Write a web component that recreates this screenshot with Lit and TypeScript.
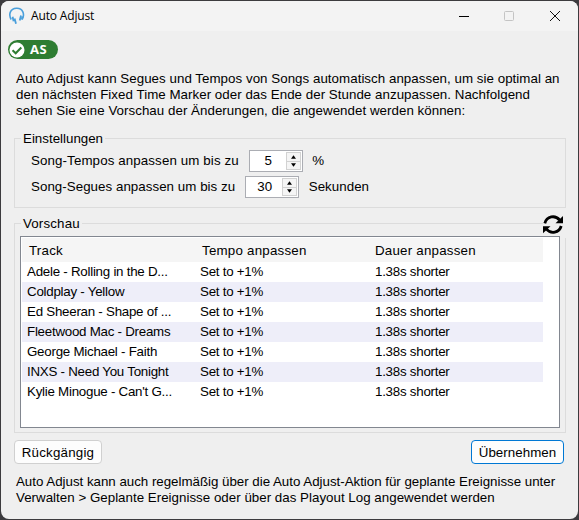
import { LitElement, html, css, svg } from 'lit';
import { customElement, property } from 'lit/decorators.js';

interface TrackRow {
  track: string;
  tempo: string;
  duration: string;
}

const ROWS: TrackRow[] = [
  { track: 'Adele - Rolling in the D...', tempo: 'Set to +1%', duration: '1.38s shorter' },
  { track: 'Coldplay - Yellow', tempo: 'Set to +1%', duration: '1.38s shorter' },
  { track: 'Ed Sheeran - Shape of ...', tempo: 'Set to +1%', duration: '1.38s shorter' },
  { track: 'Fleetwood Mac - Dreams', tempo: 'Set to +1%', duration: '1.38s shorter' },
  { track: 'George Michael - Faith', tempo: 'Set to +1%', duration: '1.38s shorter' },
  { track: 'INXS - Need You Tonight', tempo: 'Set to +1%', duration: '1.38s shorter' },
  { track: "Kylie Minogue - Can't G...", tempo: 'Set to +1%', duration: '1.38s shorter' },
];

@customElement('number-spinner')
export class NumberSpinner extends LitElement {
  static styles = css`
    :host {
      display: flex;
      box-sizing: border-box;
      width: 54px;
      height: 22px;
      padding: 1px;
      border: 1px solid #abadb3;
      background: #fff;
    }

    .value {
      flex: 1;
      line-height: 18px;
      text-align: center;
    }

    .arrows {
      display: flex;
      flex-direction: column;
      width: 15px;
    }

    .arrow {
      display: flex;
      flex: 1;
      align-items: center;
      justify-content: center;
      border: 1px solid #d2d2d2;
      background: #f5f5f5;
    }

    .arrow + .arrow {
      border-top: 0;
    }

    svg {
      display: block;
    }
  `;

  @property({ type: Number })
  value = 0;

  render() {
    return html`
      <span class="value">${this.value}</span>
      <span class="arrows">
        <span class="arrow">
          <svg width="5" height="4" viewBox="0 0 5 4"><path d="M2.5 .3 5 3.7H0Z" /></svg>
        </span>
        <span class="arrow">
          <svg width="5" height="4" viewBox="0 0 5 4"><path d="M0 .3H5L2.5 3.7Z" /></svg>
        </span>
      </span>
    `;
  }
}

@customElement('app-root')
export class AppRoot extends LitElement {
  static styles = css`
    :host {
      display: block;
      box-sizing: border-box;
      width: 579px;
      height: 520px;
      padding: 1px;
      overflow: hidden;
      background: #3c3b3e;
      color: #000;
      font-family: 'Liberation Sans', Arial, sans-serif;
      font-size: 13.33px;
      line-height: 16px;
      white-space: nowrap;
    }

    svg {
      display: block;
    }

    .window {
      display: flex;
      flex-direction: column;
      height: 518px;
      border-radius: 8px;
      overflow: hidden;
      background: #efefef;
    }

    .titlebar {
      display: flex;
      align-items: center;
      height: 30px;
      padding: 0 1px 0 8px;
      background: #f3f3f3;
    }

    .title {
      flex: 1;
      margin-left: 6px;
      font-family: 'Open Sans', 'Noto Sans', sans-serif;
      font-size: 12px;
      letter-spacing: -0.15px;
    }

    .controls {
      display: flex;
    }

    .controls svg {
      width: 45px;
      height: 28px;
    }

    .badge {
      display: flex;
      align-items: center;
      align-self: flex-start;
      box-sizing: border-box;
      width: 50px;
      height: 19px;
      margin: 9px 0 0 7px;
      padding-left: 1px;
      border-radius: 10px;
      background: #2e7d32;
      color: #fff;
      font-family: 'Open Sans', sans-serif;
      font-size: 13px;
      font-weight: 700;
    }

    .badge span {
      margin-left: 5px;
      padding-bottom: 2px;
      letter-spacing: 0.6px;
    }

    .text {
      margin: 0;
      padding-left: 15px;
    }

    .intro {
      margin-top: 12px;
      letter-spacing: 0.035px;
    }

    fieldset {
      box-sizing: border-box;
      min-width: 0;
      width: 552px;
      margin: 0 0 0 13px;
      padding: 0;
      border: 1px solid #dcdcdc;
    }

    legend {
      height: 16px;
      margin-left: 6px;
      padding: 0 2px;
      line-height: 18px;
    }

    .settings {
      height: 78px;
      margin-top: 11px;
    }

    .setting {
      display: flex;
      align-items: center;
      height: 22px;
      margin: 4px 0 0 16px;
      letter-spacing: 0.04px;
    }

    .setting.tempo {
      letter-spacing: 0.11px;
    }

    .setting number-spinner {
      margin: 0 9.5px 0 10px;
    }

    .preview-wrap {
      position: relative;
      margin-top: 7px;
    }

    .preview {
      height: 218px;
    }

    .preview legend {
      letter-spacing: 0.15px;
    }

    .refresh {
      position: absolute;
      top: 0;
      left: 542px;
      width: 24px;
      height: 23px;
      background: #efefef;
    }

    .list {
      position: relative;
      z-index: 1;
      box-sizing: border-box;
      width: 540px;
      height: 192px;
      margin: 5px 0 0 5px;
      padding: 1px;
      border: 1px solid #828790;
      background: #fff;
    }

    .row {
      display: grid;
      grid-template-columns: 173px 175px 1fr;
      align-items: center;
      width: 521px;
      height: 20px;
      padding-left: 5px;
      box-sizing: border-box;
      letter-spacing: -0.25px;
    }

    .row.alt {
      background: #eeeef9;
    }

    .row.head {
      grid-template-columns: 173px 173px 1fr;
      height: 24px;
      padding: 2px 0 0 7px;
      background: #f5f5f5;
      letter-spacing: 0.22px;
    }

    .buttons {
      display: flex;
      justify-content: space-between;
      margin: 7px 14px 0 13px;
    }

    button {
      box-sizing: border-box;
      width: 88px;
      height: 24px;
      padding: 2px 0 0;
      border: 1px solid #d0d0d0;
      border-radius: 4px;
      background: #fdfdfd;
      color: #000;
      font: inherit;
      letter-spacing: 0.2px;
    }

    button.primary {
      width: 93px;
      border-color: #0078d4;
      letter-spacing: 0.05px;
    }

    .note {
      margin-top: 10px;
      letter-spacing: -0.02px;
    }

    .note + .note {
      margin-top: 0;
      letter-spacing: 0.015px;
    }
  `;

  private renderRefresh() {
    return svg`
      <g fill="none" stroke="#000" stroke-width="2.8">
        <path d="M1.8 8.3C3.8 1.2 12 -.4 16.6 5" />
        <path d="M18.2 11C16.2 18 8 19.5 3.4 14.2" />
      </g>
      <path d="M20 1V8.2H12.5Z" />
      <path d="M0 18.3V11.2H7.5Z" />
    `;
  }

  render() {
    return html`
      <div class="window">
        <div class="titlebar">
          <svg width="16" height="18" viewBox="0 0 16 18" fill="none" stroke="#4a9fdb">
            <path d="M2.2 12.5C-.7 7.5 1 1.5 7.5 1.2S16 7.5 13.2 12.3" stroke-width="1.6" />
            <path d="M3.6 9.8 4.6 14.2M5.6 11.5 7 16.8M12 8.6 10.7 13.5M13.8 9.5 12.8 12.5" stroke-width="1.8" />
          </svg>
          <span class="title">Auto Adjust</span>
          <span class="controls">
            <svg viewBox="0 0 45 28"><path d="M17 14.5H27" stroke="#000" /></svg>
            <svg viewBox="0 0 45 28"><rect x="17.5" y="9.5" width="9" height="9" rx="1" fill="none" stroke="#c4c4c4" /></svg>
            <svg viewBox="0 0 45 28"><path d="M18 9 28 19M28 9 18 19" stroke="#111" /></svg>
          </span>
        </div>

        <div class="badge">
          <svg width="16" height="16" viewBox="0 0 16 16">
            <circle cx="8" cy="8" r="7.5" fill="#fff" />
            <path d="M3.5 8.2 6.7 11.3 12.3 5.5" fill="none" stroke="#2e7d32" stroke-width="2" />
          </svg>
          <span>AS</span>
        </div>

        <p class="text intro">
          Auto Adjust kann Segues und Tempos von Songs automatisch anpassen, um sie optimal an<br />
          den nächsten Fixed Time Marker oder das Ende der Stunde anzupassen. Nachfolgend<br />
          sehen Sie eine Vorschau der Änderungen, die angewendet werden können:
        </p>

        <fieldset class="settings">
          <legend>Einstellungen</legend>
          <div class="setting tempo">
            Song-Tempos anpassen um bis zu<number-spinner .value=${5}></number-spinner>%
          </div>
          <div class="setting">
            Song-Segues anpassen um bis zu<number-spinner .value=${30}></number-spinner>Sekunden
          </div>
        </fieldset>

        <div class="preview-wrap">
          <fieldset class="preview">
            <legend>Vorschau</legend>
            <div class="list">
              <div class="row head">
                <span>Track</span><span>Tempo anpassen</span><span>Dauer anpassen</span>
              </div>
              ${ROWS.map(
                (row, i) => html`
                  <div class="row ${i % 2 ? 'alt' : ''}">
                    <span>${row.track}</span><span>${row.tempo}</span><span>${row.duration}</span>
                  </div>
                `
              )}
            </div>
          </fieldset>
          <svg class="refresh" viewBox="0 0 24 23">${this.renderRefresh()}</svg>
        </div>

        <div class="buttons">
          <button>Rückgängig</button>
          <button class="primary">Übernehmen</button>
        </div>

        <p class="text note">
          Auto Adjust kann auch regelmäßig über die Auto Adjust-Aktion für geplante Ereignisse unter
        </p>
        <p class="text note">
          Verwalten &gt; Geplante Ereignisse oder über das Playout Log angewendet werden
        </p>
      </div>
    `;
  }
}
